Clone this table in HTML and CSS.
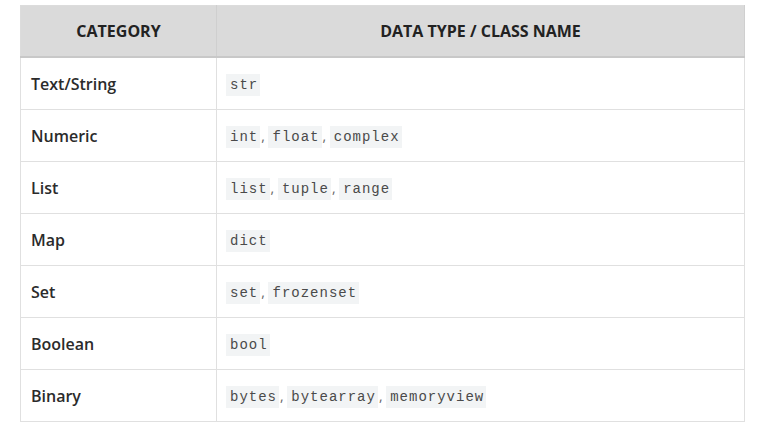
FILE: index.html
```html
<!DOCTYPE html>
<html>
<head>
<meta charset="utf-8">
<link rel="stylesheet" href="styles.css">
</head>
<body>
<table class="types">
  <thead>
    <tr><th class="col-cat">CATEGORY</th><th>DATA TYPE / CLASS NAME</th></tr>
  </thead>
  <tbody>
    <tr><td class="cat">Text/String</td><td><code>str</code></td></tr>
    <tr><td class="cat">Numeric</td><td><code>int</code>, <code>float</code>, <code>complex</code></td></tr>
    <tr><td class="cat">List</td><td><code>list</code>, <code>tuple</code>, <code>range</code></td></tr>
    <tr><td class="cat">Map</td><td><code>dict</code></td></tr>
    <tr><td class="cat">Set</td><td><code>set</code>, <code>frozenset</code></td></tr>
    <tr><td class="cat">Boolean</td><td><code>bool</code></td></tr>
    <tr><td class="cat">Binary</td><td><code>bytes</code>, <code>bytearray</code>, <code>memoryview</code></td></tr>
  </tbody>
</table>
</body>
</html>
```
FILE: styles.css
```css
html, body {
  margin: 0;
  padding: 0;
  background: #fff;
}
body {
  padding: 5px 0 0 20px;
  font-family: "Open Sans", "Noto Sans", sans-serif;
  color: #333;
}
.types {
  border-collapse: collapse;
  width: 725px;
  border: 1px solid #dcdcdc;
}
.types th {
  background: #dadada;
  font-weight: 700;
  font-size: 16px;
  color: #222;
  height: 50px;
  padding: 0 10px;
  text-align: center;
  border-right: 1px solid #cfcfcf;
  border-bottom: 2px solid #c8c8c8;
}
.types .col-cat {
  width: 175px;
}
.types td {
  height: 51px;
  padding: 0 9px;
  border: 1px solid #e0e0e0;
  font-size: 14px;
  color: #666;
  vertical-align: middle;
}
.types td.cat {
  padding-left: 10px;
  font-size: 16px;
  font-weight: 600;
  color: #2b2b2b;
}
code {
  font-family: "Liberation Mono", "Courier New", monospace;
  font-size: 14px;
  letter-spacing: 1px;
  background: #f2f4f5;
  color: #4a4a4a;
  padding: 3px 2px 3px 4px;
  margin-right: 1px;
}
```
